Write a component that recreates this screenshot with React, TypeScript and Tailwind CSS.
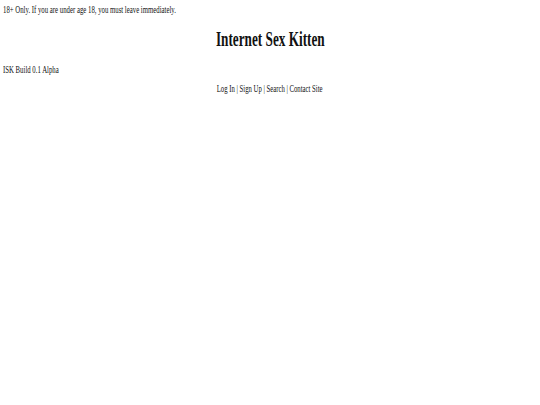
import React from 'react';

const serif = "font-['Liberation_Serif','Times_New_Roman',serif]";

export default function App() {
  return (
    <div className={`min-h-[405px] bg-white text-[#111] ${serif} px-[3px] pt-[4px]`}>
      <p className="text-[10.5px] leading-[12px]">
        <span className="inline-block origin-left scale-x-[0.645] whitespace-nowrap">
          18+ Only. If you are under age 18, you must leave immediately.
        </span>
      </p>
      <h1 className="mt-[11px] mb-[13px] text-center text-[21px] leading-[24px] font-bold">
        <span className="inline-block scale-x-[0.63] whitespace-nowrap">Internet Sex Kitten</span>
      </h1>
      <p className="text-[10.5px] leading-[12px]">
        <span className="inline-block origin-left scale-x-[0.645] whitespace-nowrap">ISK Build 0.1 Alpha</span>
      </p>
      <p className="mt-[7px] text-center text-[10.5px] leading-[12px]">
        <span className="inline-block scale-x-[0.64] whitespace-nowrap">
          Log In | Sign Up | Search | Contact Site
        </span>
      </p>
    </div>
  );
}
